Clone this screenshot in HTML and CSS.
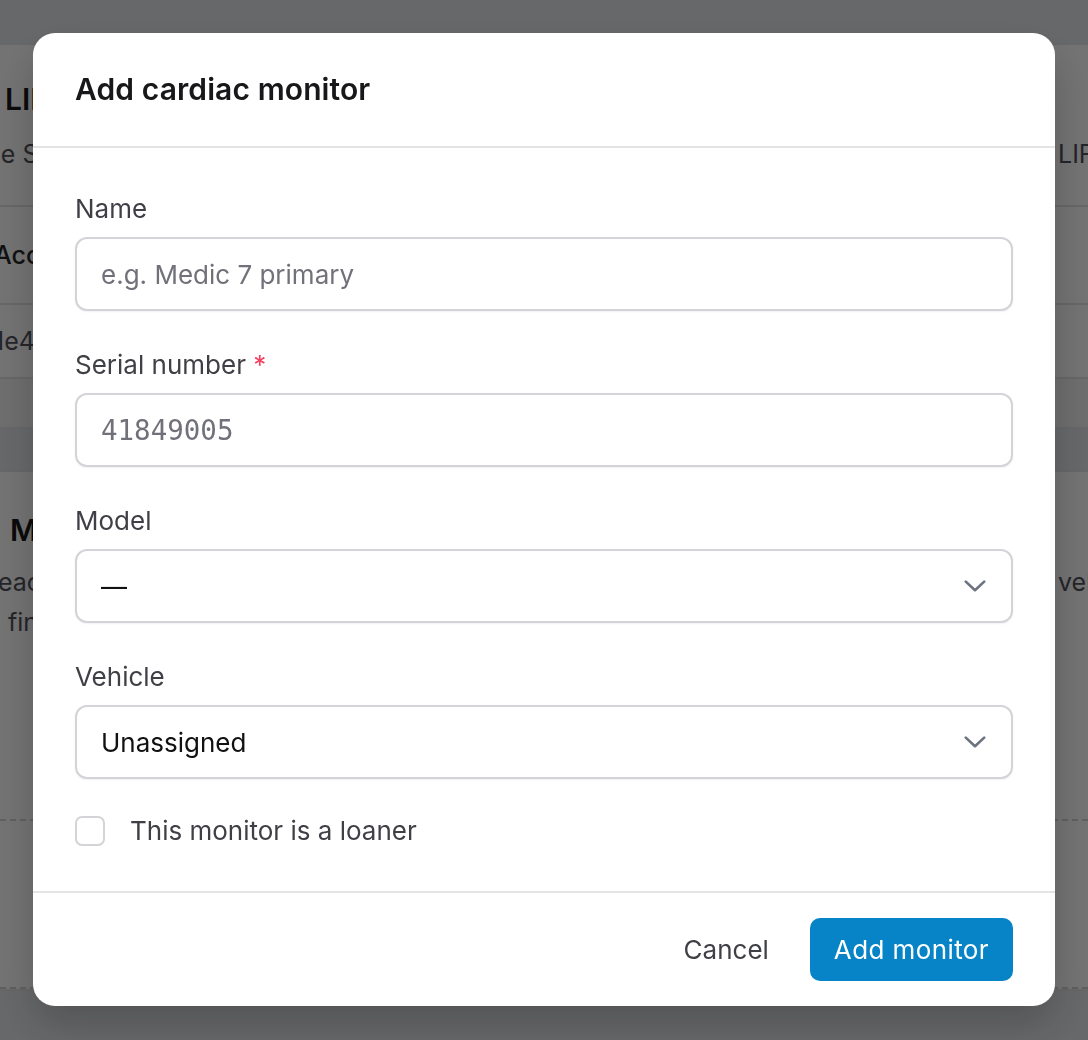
FILE: index.html
```html
<!DOCTYPE html>
<html lang="en">
<head>
  <meta charset="UTF-8">
  <meta name="viewport" content="width=device-width, initial-scale=1.0">
  <title>Add cardiac monitor</title>
  <link rel="stylesheet" href="styles.css">
</head>
<body>

  <!-- page behind the dialog -->
  <main class="page">
    <section class="card">
      <div class="card-head">
        <h2 class="card-title">LIFEPAK</h2>
        <p class="card-sub split"><span>Use Stryker</span><span>LIFENET</span></p>
      </div>
      <div class="table">
        <div class="table-row table-headrow"><span>Account</span></div>
        <div class="table-row"><span>1e4f09</span></div>
        <div class="table-foot"></div>
      </div>
    </section>

    <section class="card card-second">
      <div class="card-head">
        <h2 class="card-title">Monitors</h2>
        <p class="card-sub split"><span>each</span><span>vehicle</span></p>
        <p class="card-sub card-sub-2">find</p>
      </div>
      <div class="empty"></div>
    </section>
  </main>

  <div class="overlay">
    <div class="modal" role="dialog" aria-labelledby="modal-title">
      <div class="modal-head">
        <h1 id="modal-title">Add cardiac monitor</h1>
      </div>

      <form class="modal-body">
        <div class="field">
          <label for="name">Name</label>
          <input id="name" class="input" type="text" placeholder="e.g. Medic 7 primary">
        </div>

        <div class="field">
          <label for="serial">Serial number <span class="req">*</span></label>
          <input id="serial" class="input mono" type="text" placeholder="41849005">
        </div>

        <div class="field">
          <label for="model">Model</label>
          <div class="select-wrap">
            <select id="model" class="input select">
              <option>—</option>
              <option>LIFEPAK 15</option>
              <option>LIFEPAK 35</option>
            </select>
            <svg class="chevron" width="22" height="12" viewBox="0 0 22 12" aria-hidden="true">
              <path d="M1.8 1.6l9.2 8.6 9.2-8.6" fill="none" stroke="currentColor" stroke-width="2.6" stroke-linecap="round" stroke-linejoin="round"/>
            </svg>
          </div>
        </div>

        <div class="field">
          <label for="vehicle">Vehicle</label>
          <div class="select-wrap">
            <select id="vehicle" class="input select">
              <option>Unassigned</option>
              <option>Medic 3</option>
              <option>Medic 7</option>
            </select>
            <svg class="chevron" width="22" height="12" viewBox="0 0 22 12" aria-hidden="true">
              <path d="M1.8 1.6l9.2 8.6 9.2-8.6" fill="none" stroke="currentColor" stroke-width="2.6" stroke-linecap="round" stroke-linejoin="round"/>
            </svg>
          </div>
        </div>

        <label class="check">
          <input type="checkbox" class="checkbox">
          <span>This monitor is a loaner</span>
        </label>
      </form>

      <div class="modal-foot">
        <button type="button" class="btn btn-ghost">Cancel</button>
        <button type="button" class="btn btn-primary">Add monitor</button>
      </div>
    </div>
  </div>

</body>
</html>
```

FILE: styles.css
```css
* {
  box-sizing: border-box;
}

html,
body {
  margin: 0;
  height: 100%;
  overflow: hidden;
}

body {
  background-color: #e5e7eb;
  font-family: Inter, "Noto Sans", sans-serif;
  color: #18181b;
}

/* background page */
.page {
  padding-top: 43px;
}

.card {
  background-color: #fff;
  border-top: 2px solid #e4e4e7;
  border-bottom: 2px solid #e4e4e7;
}

.card-second {
  margin-top: 41px;
}

.card-head {
  padding: 36px 0 32px 5px;
}

.card-title {
  margin: 0;
  font-size: 30px;
  line-height: 36px;
  font-weight: 600;
  color: #18181b;
  white-space: nowrap;
}

.card-sub {
  margin: 18px 0 0 -5px;
  font-size: 25px;
  line-height: 38px;
  color: #52525b;
  white-space: nowrap;
}

.split {
  display: grid;
  grid-template-columns: 1058px auto;
}

.split span:first-child {
  margin-left: -31px;
}

.card-second .card-head {
  padding: 40px 0 30px 10px;
}

.card-second .card-title {
  margin-bottom: 14px;
}

.card-second .card-sub {
  margin: 0 0 0 -10px;
  line-height: 40px;
}

.card-second .split span:first-child {
  margin-left: -2px;
}

.card-second .card-sub-2 {
  padding-left: 8px;
}

.table-row {
  display: flex;
  height: 98px;
  align-items: center;
  border-top: 2px solid #e4e4e7;
  font-size: 25px;
  color: #52525b;
  margin-left: -6px;
}

.table-headrow {
  color: #27272a;
  font-weight: 500;
}

.table-row + .table-row {
  height: 74px;
}

.table-foot {
  height: 50px;
  border-top: 2px solid #e4e4e7;
  background-color: #f4f4f5;
}

.empty {
  margin: 147px 0 0;
  height: 170px;
  border-top: 2px dashed #d4d4d8;
  border-bottom: 2px dashed #d4d4d8;
}

/* dialog */
.overlay {
  position: fixed;
  inset: 0;
  background-color: rgba(0, 0, 0, 0.55);
  display: flex;
  justify-content: center;
  align-items: flex-start;
  padding-top: 33px;
}

.modal {
  width: 1022px;
  background-color: #fff;
  border-radius: 22px;
  box-shadow: 0 20px 40px rgba(0, 0, 0, 0.2);
  overflow: hidden;
}

.modal-head {
  padding: 38px 42px 39px;
  border-bottom: 2px solid #e4e4e7;
}

.modal-head h1 {
  margin: 0;
  font-size: 30px;
  line-height: 36px;
  font-weight: 600;
  letter-spacing: 0.1px;
  color: #18181b;
}

.modal-body {
  display: flex;
  flex-direction: column;
  gap: 36px;
  padding: 43px 42px 42px;
}

.field label {
  display: block;
  margin-bottom: 10px;
  font-size: 26px;
  line-height: 36px;
  color: #3f3f46;
}

.req {
  color: #f43f5e;
}

.input {
  display: block;
  width: 100%;
  height: 74px;
  padding: 0 24px;
  border: 2px solid #d4d4d8;
  border-radius: 12px;
  background-color: #fff;
  box-shadow: 0 1px 2px rgba(0, 0, 0, 0.06);
  font-family: inherit;
  font-size: 26px;
  color: #111;
  outline: none;
}

.input::placeholder {
  color: #71717a;
}

.mono {
  font-family: "DejaVu Sans Mono", "Liberation Mono", monospace;
  font-size: 27.5px;
}

.select-wrap {
  position: relative;
}

.select {
  appearance: none;
  -webkit-appearance: none;
  cursor: pointer;
}

.chevron {
  position: absolute;
  right: 27px;
  top: 31px;
  color: #6b7280;
  pointer-events: none;
}

.check {
  display: flex;
  align-items: center;
  gap: 25px;
  margin-top: -2px;
  font-size: 26px;
  line-height: 36px;
  color: #3f3f46;
  cursor: pointer;
}

.checkbox {
  appearance: none;
  -webkit-appearance: none;
  flex: none;
  width: 30px;
  height: 30px;
  margin: 0;
  border: 2px solid #d4d4d8;
  border-radius: 7px;
  background-color: #fff;
}

.modal-foot {
  display: flex;
  justify-content: flex-end;
  align-items: center;
  gap: 16px;
  padding: 25px 42px;
  border-top: 2px solid #e4e4e7;
}

.btn {
  height: 63px;
  padding: 0 25px;
  border: 0;
  border-radius: 10px;
  font-family: inherit;
  font-size: 26px;
  cursor: pointer;
}

.btn-ghost {
  background-color: transparent;
  color: #3f3f46;
}

.btn-primary {
  padding: 0 24px;
  background-color: #0784c7;
  color: #fff;
  letter-spacing: 0.4px;
}
```
